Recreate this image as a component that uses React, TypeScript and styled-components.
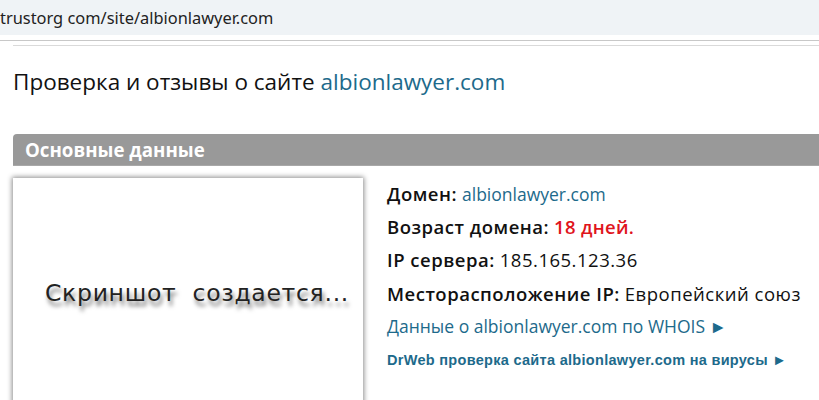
import React from "react";
import styled, { createGlobalStyle } from "styled-components";

const Global = createGlobalStyle`
  html, body {
    margin: 0;
    padding: 0;
    background: #fff;
    overflow: hidden;
  }
  body {
    font-family: "Open Sans", "Noto Sans", sans-serif;
    color: #111;
  }
`;

const AddressBar = styled.div`
  height: 35px;
  background: #eff3f6;
  display: flex;
  align-items: center;
  font-family: "Noto Sans", "Open Sans", sans-serif;
  font-size: 16.4px;
  color: #222;
  white-space: nowrap;
`;

const Rule = styled.div<{ $indent?: number; $color: string }>`
  height: 1px;
  margin-left: ${(p) => p.$indent || 0}px;
  background: ${(p) => p.$color};
`;

const Rules = styled.div`
  display: flex;
  flex-direction: column;
  gap: 4px;
  padding-top: 5px;
`;

const Page = styled.div`
  padding-left: 13px;
`;

const Title = styled.h1`
  margin: 21px 0 0;
  font-size: 22.5px;
  font-weight: 400;
  line-height: 30px;
  color: #111;
  white-space: nowrap;
`;

const Link = styled.a`
  color: #1d6a8b;
  text-decoration: none;
`;

const SectionBar = styled.div`
  margin-top: 37px;
  height: 31px;
  background: #999;
  border-radius: 4px 0 0 0;
  border-bottom: 1px solid #a8a8a8;
  display: flex;
  align-items: center;
  padding-left: 12px;
  color: #fff;
  font-size: 18.7px;
  font-weight: 700;
`;

const Content = styled.div`
  display: flex;
  gap: 24px;
  padding-top: 12px;
`;

const ShotBox = styled.div`
  width: 350px;
  height: 240px;
  flex: none;
  background: #fff;
  box-shadow: 0 0 5px 1px rgba(0, 0, 0, 0.45);
  display: flex;
  align-items: center;
  justify-content: center;
`;

const ShotText = styled.span`
  margin-top: -10px;
  margin-left: 18px;
  font-family: "DejaVu Sans", sans-serif;
  font-size: 23.5px;
  letter-spacing: 0.7px;
  word-spacing: 8px;
  color: #222;
  white-space: nowrap;
  text-shadow: 2px 5px 4px rgba(0, 0, 0, 0.55);
`;

const Info = styled.div`
  display: flex;
  flex-direction: column;
  margin-top: -1px;
`;

const Line = styled.div<{ $small?: boolean }>`
  height: 33.2px;
  display: flex;
  align-items: center;
  font-size: ${(p) => (p.$small ? 14.5 : 17.5)}px;
  white-space: nowrap;
  ${(p) =>
    p.$small &&
    `font-family: "Liberation Sans", Arial, sans-serif; font-weight: 700; letter-spacing: 0.3px;`}
`;

const Label = styled.span`
  font-size: 18.5px;
  font-weight: 600;
  letter-spacing: 0.5px;
  margin-right: 5px;
`;

const Value = styled.span`
  font-size: 18.5px;
  letter-spacing: 0.5px;
`;

const Red = styled.span`
  color: #e0141c;
  font-size: 18.5px;
  font-weight: 600;
  letter-spacing: 0.3px;
`;

export default function App() {
  return (
    <>
      <Global />
      <AddressBar>trustorg com/site/albionlawyer.com</AddressBar>
      <Rules>
        <Rule $color="#c8c8c8" />
        <Rule $indent={13} $color="#dadada" />
      </Rules>
      <Page>
        <Title>
          Проверка и отзывы о сайте <Link>albionlawyer.com</Link>
        </Title>
        <SectionBar>Основные данные</SectionBar>
        <Content>
          <ShotBox>
            <ShotText>Скриншот создается...</ShotText>
          </ShotBox>
          <Info>
            <Line>
              <Label>Домен:</Label>
              <Link>albionlawyer.com</Link>
            </Line>
            <Line>
              <Label>Возраст домена:</Label>
              <Red>18 дней.</Red>
            </Line>
            <Line>
              <Label>IP сервера:</Label>
              <Value>185.165.123.36</Value>
            </Line>
            <Line>
              <Label>Месторасположение IP:</Label>
              <Value>Европейский союз</Value>
            </Line>
            <Line>
              <Link>Данные о albionlawyer.com по WHOIS ►</Link>
            </Line>
            <Line $small>
              <Link>DrWeb проверка сайта albionlawyer.com на вирусы ►</Link>
            </Line>
          </Info>
        </Content>
      </Page>
    </>
  );
}
